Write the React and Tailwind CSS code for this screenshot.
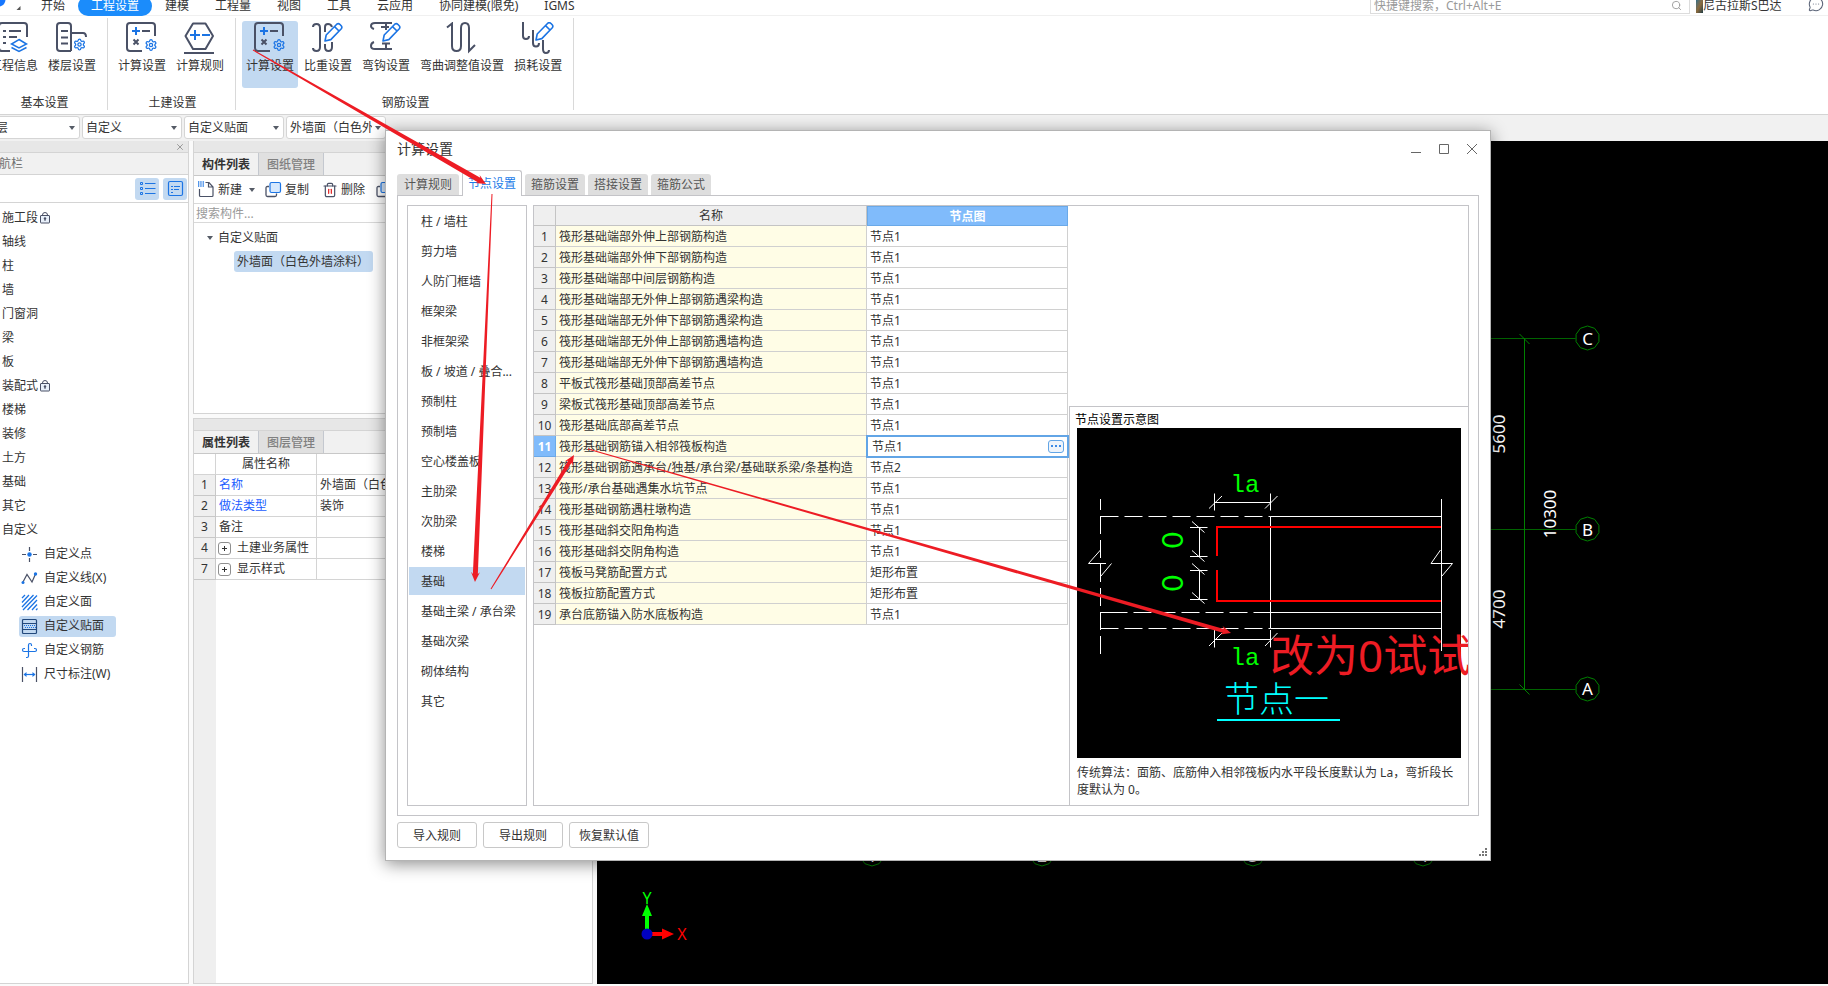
import React, { useState } from 'react';
import { Settings, Search, X, Trash2, MessageCircleMore } from 'lucide-react';

const INK = '#4a5166';
const BLUE = '#1b74e4';

const menus = ['开始', '工程设置', '建模', '工程量', '视图', '工具', '云应用', '协同建模(限免)', 'IGMS'];

const navItems = [
  { name: '施工段', locked: true },
  { name: '轴线' },
  { name: '柱' },
  { name: '墙' },
  { name: '门窗洞' },
  { name: '梁' },
  { name: '板' },
  { name: '装配式', locked: true },
  { name: '楼梯' },
  { name: '装修' },
  { name: '土方' },
  { name: '基础' },
  { name: '其它' },
  { name: '自定义' },
];

const categories = [
  '柱 / 墙柱', '剪力墙', '人防门框墙', '框架梁', '非框架梁', '板 / 坡道 / 叠合...',
  '预制柱', '预制墙', '空心楼盖板', '主肋梁', '次肋梁', '楼梯', '基础',
  '基础主梁 / 承台梁', '基础次梁', '砌体结构', '其它',
];

const nodeRows = [
  ['筏形基础端部外伸上部钢筋构造', '节点1'],
  ['筏形基础端部外伸下部钢筋构造', '节点1'],
  ['筏形基础端部中间层钢筋构造', '节点1'],
  ['筏形基础端部无外伸上部钢筋遇梁构造', '节点1'],
  ['筏形基础端部无外伸下部钢筋遇梁构造', '节点1'],
  ['筏形基础端部无外伸上部钢筋遇墙构造', '节点1'],
  ['筏形基础端部无外伸下部钢筋遇墙构造', '节点1'],
  ['平板式筏形基础顶部高差节点', '节点1'],
  ['梁板式筏形基础顶部高差节点', '节点1'],
  ['筏形基础底部高差节点', '节点1'],
  ['筏形基础钢筋锚入相邻筏板构造', '节点1'],
  ['筏形基础钢筋遇承台/独基/承台梁/基础联系梁/条基构造', '节点2'],
  ['筏形/承台基础遇集水坑节点', '节点1'],
  ['筏形基础钢筋遇柱墩构造', '节点1'],
  ['筏形基础斜交阳角构造', '节点1'],
  ['筏形基础斜交阴角构造', '节点1'],
  ['筏板马凳筋配置方式', '矩形布置'],
  ['筏板拉筋配置方式', '矩形布置'],
  ['承台底筋锚入防水底板构造', '节点1'],
];

const properties = [
  { no: 1, name: '名称', value: '外墙面（白色外墙涂料）', link: true },
  { no: 2, name: '做法类型', value: '装饰', link: true },
  { no: 3, name: '备注', value: '' },
  { no: 4, name: '土建业务属性', value: '', group: true },
  { no: 7, name: '显示样式', value: '', group: true },
];

/* ---------- ribbon icons ---------- */

const RibbonSvg = ({ children }) => (
  <svg width="32" height="32" viewBox="0 0 32 32" fill="none" stroke={INK} strokeWidth="2" aria-hidden="true">
    {children}
  </svg>
);

const Gear = ({ x, y }) => <Settings x={x} y={y} width={13} height={13} color={BLUE} strokeWidth={2.4} />;

const Pencil = ({ x = 0, y = 0 }) => (
  <g transform={`translate(${x} ${y})`} stroke={BLUE} strokeWidth="1.6" strokeLinejoin="round">
    <path d="M13 19 14.2 13 25 2 Q26.5 1 28 2.5 L29.2 3.8 Q30.5 5.3 29.3 6.8 L18.8 17.6Z" />
    <path d="M22.5 4.6 27 9" />
  </g>
);

const ProjectIcon = () => (
  <RibbonSvg>
    <path d="M12 29H4Q1 29 1 26V4Q1 1 4 1H26Q29 1 29 4V15" />
    <path d="M5 9h3M11 9h12M5 15h3M11 15h8M5 21h3" />
    <path d="M21 17.5 28.5 22 21 26 13.5 22ZM13.5 25.5 21 29.5 28.5 25.5" stroke={BLUE} strokeWidth="1.5" />
  </RibbonSvg>
);

const FloorIcon = () => (
  <RibbonSvg>
    <path d="M15 29H4Q1 29 1 26V4Q1 1 4 1H12Q15 1 15 4V29M15 11H27Q30 11 30 15" />
    <path d="M5 9h7M5 15.5h7M5 21.5h7" />
    <Gear x={17} y={16} />
  </RibbonSvg>
);

const CalcIcon = () => (
  <RibbonSvg>
    <path d="M16 29H4Q1 29 1 26V4Q1 1 4 1H26Q29 1 29 4V14" />
    <path d="M6 9h8M10 5v8" stroke={BLUE} />
    <path d="M16 9h8M7.5 17.5l5 5M12.5 17.5l-5 5" />
    <Gear x={18.5} y={16.5} />
  </RibbonSvg>
);

const RuleIcon = () => (
  <RibbonSvg>
    <path d="M9 1.5H21.5L29 14 21.5 27H9L1.5 14Z" strokeLinejoin="round" />
    <path d="M6 13h10M11 8v10M18 13h8" stroke={BLUE} />
    <path d="M0 31h30" />
  </RibbonSvg>
);

const WeightIcon = () => (
  <RibbonSvg>
    <path d="M1 5Q1 2 4.5 2Q8 2 8 6V25Q8 29 4.5 29Q1 29 1 26" />
    <path d="M13 10V5Q13 2 16 2Q19 2 20 5M13 22V25Q13 29 16.5 29Q20 29 20 25V20" />
    <Pencil />
  </RibbonSvg>
);

const HookIcon = () => (
  <RibbonSvg>
    <path d="M4 7Q1 6 1 4Q1 1 5 1H22M16 1V8M11 5H19" />
    <path d="M4 20Q1 21 1 24Q1 27 5 27H22M16 21V27M12 21.5H20" />
    <Pencil />
  </RibbonSvg>
);

const BendIcon = () => (
  <RibbonSvg>
    <path d="M1 5.5 6 1.5V24Q6 29 10.5 29Q15 29 15 24V6Q15 1 19 1Q23 1 23 6V29L29 23" />
  </RibbonSvg>
);

const LossIcon = () => (
  <RibbonSvg>
    <path d="M1 0V14Q1 17 4 17Q7 17 7 14M11 8V21Q11 24.5 14 24.5Q17 24.5 17 21M21 18V27Q21 31 24 31Q27 31 27 28" />
    <Pencil x={1} y={-1} />
  </RibbonSvg>
);

const ribbonGroups = [
  { title: '基本设置', buttons: [['工程信息', ProjectIcon], ['楼层设置', FloorIcon]] },
  { title: '土建设置', buttons: [['计算设置', CalcIcon], ['计算规则', RuleIcon]] },
  {
    title: '钢筋设置',
    active: '计算设置',
    buttons: [
      ['计算设置', CalcIcon],
      ['比重设置', WeightIcon],
      ['弯钩设置', HookIcon],
      ['弯曲调整值设置', BendIcon],
      ['损耗设置', LossIcon],
    ],
  },
];

/* ---------- small icons ---------- */

const SmallSvg = ({ children, className }) => (
  <svg width="17" height="17" viewBox="0 0 17 17" fill="none" stroke={BLUE} className={className} aria-hidden="true">
    {children}
  </svg>
);

const Caret = ({ className }) => (
  <svg width="6" height="4" viewBox="0 0 6 4" className={className} aria-hidden="true">
    <path d="M0 0h6L3 4z" fill="#555b66" />
  </svg>
);

const LockIcon = () => (
  <svg width="10" height="12" viewBox="0 0 10 12" fill="none" stroke={INK} className="ml-[2px]" aria-label="已锁定">
    <path d="M2.5 4V3Q2.5 .5 5 .5Q7.5 .5 7.5 3V4" />
    <rect x=".5" y="3.500" width="9" height="7.500" rx=".5" fill="#e8f0fa" />
    <circle cx="5" cy="6.500" r="1.200" fill={INK} stroke="none" />
    <path d="M5 7v2" />
  </svg>
);

const CopyIcon = () => (
  <SmallSvg>
    <path d="M4 5.5H2.5Q1 5.5 1 7V14Q1 15.5 2.5 15.5H10Q11.5 15.5 11.5 14V12.5" stroke={INK} strokeWidth="1.3" />
    <rect x="5" y="1.5" width="10.5" height="10" rx="1.5" fill="#d6e8fd" strokeWidth="1.2" />
  </SmallSvg>
);

const TrashIcon = () => (
  <span className="relative flex">
    <Trash2 size={16} color={INK} strokeWidth={1.8} className="[&>line]:stroke-[#e02020] [&>path:nth-child(-n+2)]:stroke-[#e02020]" />
  </span>
);

const customTools = [
  {
    name: '自定义点',
    icon: (
      <SmallSvg>
        <path d="M8.5 1v4M8.5 12v4M1 8.5h4M12 8.5h4" stroke={INK} strokeWidth="1.2" />
        <circle cx="8.5" cy="8.5" r="2.2" fill={BLUE} stroke="none" />
      </SmallSvg>
    ),
  },
  {
    name: '自定义线(X)',
    icon: (
      <SmallSvg>
        <path d="M2 12 6 4.5 11 12 14.5 4" stroke={INK} strokeWidth="1.2" />
        <circle cx="2" cy="12.5" r="1.5" fill={BLUE} stroke="none" />
        <circle cx="14.5" cy="4" r="1.7" fill={BLUE} stroke="none" />
      </SmallSvg>
    ),
  },
  {
    name: '自定义面',
    icon: (
      <SmallSvg>
        <path d="M1 4 4 1M1 8.5 8 1M1 13 12.5 1M2 16 16 1.5M6.5 16 16 6M11 16 16 10.5M15 16 16.5 14.5" strokeWidth="1.3" />
      </SmallSvg>
    ),
  },
  {
    name: '自定义贴面',
    active: true,
    icon: (
      <SmallSvg>
        <rect x="1.5" y="1.5" width="14" height="14" rx="1" stroke="#23497c" strokeWidth="1.2" />
        <path d="M2 5.5h13M2 11.5h13" stroke="#23497c" />
        <path d="M3 7.5h12M4 9.5h11" strokeDasharray="1 1" />
      </SmallSvg>
    ),
  },
  {
    name: '自定义钢筋',
    icon: (
      <SmallSvg>
        <path d="M10.500 4V3Q10.500 1.500 9 1.500Q7.500 1.500 7.500 3V14Q7.500 15.500 6 15.500H5M4 6.500H3Q1.500 6.500 1.500 8Q1.500 9.500 3 9.500H14Q15.500 9.500 15.500 8Q15.500 6.500 14 6.500H13" strokeWidth="1.200" />
      </SmallSvg>
    ),
  },
  {
    name: '尺寸标注(W)',
    icon: (
      <SmallSvg>
        <path d="M1.5 1v15M15.500 1v15" stroke={INK} strokeWidth="1.2" />
        <path d="M3 8.500h11" strokeWidth="1.2" />
        <path d="M2.500 8.500 5.500 6v5zM14.500 8.500 11.500 6v5z" fill={BLUE} stroke="none" />
      </SmallSvg>
    ),
  },
];

/* ---------- top area ---------- */

const MenuBar = () => (
  <header className="flex h-[16px] shrink-0 items-end border-b border-[#f0f0f0] bg-white">
    <div className="flex w-[28px] shrink-0 items-start self-start">
      <svg width="24" height="14" viewBox="0 0 24 14" aria-hidden="true">
        <path d="M0 0H5.500Q5 5 0 6.500Z" fill="#1677ff" />
        <path d="M20.500 6V10H16.500Z" fill="#555" />
      </svg>
    </div>
    <nav className="-mb-px flex">
      {menus.map((m) => (
        <button
          key={m}
          className={
            m === '工程设置'
              ? 'h-[20px] rounded-[10px] bg-[#1b8cfb] px-[13px] leading-[20px] text-white'
              : 'h-[20px] px-[13px] leading-[20px]'
          }
        >
          {m}
        </button>
      ))}
    </nav>
    <div className="mb-px ml-auto flex w-[320px] items-center border border-[#dcdcdc] pr-[7px] pl-[3px]">
      <input
        aria-label="快捷键搜索"
        placeholder="快捷键搜索，Ctrl+Alt+E"
        className="h-[16px] min-w-0 flex-1 pt-px outline-none placeholder:text-[#9a9a9a]"
      />
      <Search size={11} color="#9a9a9a" />
    </div>
    <div className="ml-[6px] flex h-[18px] w-[112px] items-center">
      <span className="h-[13px] w-[7px] bg-linear-to-br from-[#2f6f86] via-[#8a6a3c] to-[#1d3d44]" />
      <span>尼古拉斯S巴达</span>
    </div>
    <button className="mr-[4px] w-[16px] pb-[3px]" aria-label="消息">
      <MessageCircleMore size={16} color="#5b6478" strokeWidth={1.6} />
    </button>
  </header>
);

const Ribbon = () => (
  <div className="flex h-[99px] shrink-0 border-b border-[#d4d4d4] bg-white pt-[2px]">
    <div className="-ml-[20px] flex h-[92px]">
      {ribbonGroups.map((g) => (
        <section key={g.title} className="flex flex-col items-center border-r border-[#d9d9d9] pt-[3px] pr-[7px] pl-[6px]">
          <div className="flex gap-[2px]">
            {g.buttons.map(([label, Icon]) => (
              <button
                key={label}
                className={
                  g.active === label
                    ? 'flex h-[67px] flex-col items-center gap-[2px] rounded-[3px] bg-[#c2d9f1] px-[4px] pt-px'
                    : 'flex h-[67px] flex-col items-center gap-[2px] px-[4px] pt-px'
                }
              >
                <Icon />
                <span className="leading-[20px]">{label}</span>
              </button>
            ))}
          </div>
          <h2 className="mt-[6px] pl-[3px] leading-[18px]">{g.title}</h2>
        </section>
      ))}
    </div>
  </div>
);

const FilterBar = () => (
  <div className="-ml-[20px] flex h-[26px] shrink-0 items-start gap-[2px] bg-[#f1f1f1] pt-px">
    {[
      ['楼层', '首层'],
      ['专业', '自定义'],
      ['构件类型', '自定义贴面'],
      ['构件', '外墙面（白色外墙涂料）'],
    ].map(([label, value]) => (
      <div key={label} className="relative w-[100px]">
        <select
          aria-label={label}
          className="h-[23px] w-full appearance-none rounded-[3px] border border-[#d5d5d5] bg-white pr-[13px] pl-[3px] outline-none"
        >
          <option>{value}</option>
        </select>
        <Caret className="pointer-events-none absolute top-[10px] right-[5px]" />
      </div>
    ))}
  </div>
);

/* ---------- left panels ---------- */

const NavPanel = () => (
  <aside className="flex w-[189px] shrink-0 flex-col border-r border-b border-[#d4d4d4] bg-white">
    <div className="flex h-[12px] items-center justify-end border-b border-[#d4d4d4] bg-[#e7e7e7] pr-[3px]">
      <button aria-label="关闭导航栏"><X size={10} color="#8a8a8a" /></button>
    </div>
    <h2 className="-ml-[13px] h-[22px] border-b border-[#d4d4d4] bg-[#f1f1f1] leading-[22px] text-[#707070]">导航栏</h2>
    <div className="flex h-[28px] items-center justify-end gap-[4px] border-b border-[#d4d4d4] pr-px">
      <button aria-label="列表" className="flex h-[22px] w-[24px] items-center justify-center rounded-[3px] bg-[#c2d9f1]">
        <SmallSvg>
          <path d="M6 3.500h10.500M6 8.500h10.500M6 13.500h10.500" />
          <path d="M1.500 2.500h2v2h-2zM1.500 7.500h2v2h-2zM1.500 12.500h2v2h-2z" />
        </SmallSvg>
      </button>
      <button aria-label="面板" className="flex h-[22px] w-[24px] items-center justify-center rounded-[3px] bg-[#c2d9f1]">
        <SmallSvg>
          <rect x="1.500" y="1.500" width="14" height="14" rx="1.500" strokeWidth="1.200" />
          <path d="M4 6.500h2M7 6.500h6M4 9.500h2M7 9.500h5M4 12.500h2" />
        </SmallSvg>
      </button>
    </div>
    <ul className="pt-[3px]">
      {navItems.map((item) => (
        <li key={item.name} className="flex h-[24px] items-center pl-[2px]">
          {item.name}
          {item.locked && <LockIcon />}
        </li>
      ))}
      {customTools.map((tool) => (
        <li key={tool.name} className="flex h-[24px] items-center pl-[19px]">
          <button
            className={
              tool.active
                ? 'flex h-[21px] items-center gap-[6px] rounded-[3px] bg-[#c2d9f1] pr-[12px] pl-[2px]'
                : 'flex h-[21px] items-center gap-[6px] pl-[2px]'
            }
          >
            {tool.icon}
            {tool.name}
          </button>
        </li>
      ))}
    </ul>
  </aside>
);

const PanelTabs = ({ tabs }) => (
  <div>
    <div className="h-[12px] border-b border-[#d4d4d4] bg-[#e7e7e7]" />
    <div className="flex h-[23px] border-b border-[#c8c8c8] bg-[#f1f1f1]">
      <button className="w-[65px] border-r border-[#c4c8cf] pt-px font-bold">{tabs[0]}</button>
      <button className="w-[65px] border-r border-[#c4c8cf] bg-[#e0e0e0] pt-px font-medium text-[#808080]">{tabs[1]}</button>
    </div>
  </div>
);

const ComponentPanel = () => (
  <section className="flex h-[273px] shrink-0 flex-col border border-t-0 border-[#d4d4d4] bg-white">
    <PanelTabs tabs={['构件列表', '图纸管理']} />
    <div className="flex h-[28px] shrink-0 items-center overflow-hidden border-b border-[#d9d9d9] pl-[4px] whitespace-nowrap">
      <button className="flex items-center gap-[3px]">
        <SmallSvg>
          <path d="M1.500 8V14.500Q1.500 15.500 2.500 15.500H14Q15 15.500 15 14.500V6L11 1.500H7.500M10.500 1.500V6H15" stroke={INK} strokeWidth="1.200" />
          <path d="M0 1h6M0 3h6M0 5h6" strokeWidth="1.300" strokeDasharray="1.300 1" />
        </SmallSvg>
        新建
      </button>
      <Caret className="ml-[7px]" />
      <button className="ml-[10px] flex items-center gap-[3px]"><CopyIcon />复制</button>
      <button className="ml-[13px] flex items-center gap-[3px]"><TrashIcon />删除</button>
      <button className="ml-[11px] flex items-center gap-[3px]"><CopyIcon />层间复制</button>
    </div>
    <input
      aria-label="搜索构件"
      placeholder="搜索构件..."
      className="h-[19px] shrink-0 border-b border-[#d9d9d9] pt-px pl-[2px] outline-none placeholder:text-[#9a9a9a]"
    />
    <div className="flex flex-col items-start gap-px pt-[3px]">
      <div className="flex h-[24px] items-center pl-[13px]">
        <Caret className="mr-[5px]" />
        自定义贴面
      </div>
      <button className="ml-[40px] h-[21px] rounded-[3px] bg-[#c2d9f1] pr-[4px] pl-[3px]">外墙面（白色外墙涂料）</button>
    </div>
  </section>
);

const PropertyPanel = () => (
  <section className="mt-[4px] flex flex-1 flex-col border border-[#d4d4d4] bg-white">
    <PanelTabs tabs={['属性列表', '图层管理']} />
    <table className="w-full table-fixed border-separate border-spacing-0">
      <thead>
        <tr className="h-[21px]">
          <th className="w-[22px] border-r border-b border-[#d4d4d4]" aria-label="序号" />
          <th className="w-[101px] border-r border-b border-[#d4d4d4] p-0 font-normal">属性名称</th>
          <th className="border-b border-[#d4d4d4] p-0 font-normal">属性值</th>
        </tr>
      </thead>
      <tbody>
        {properties.map((p) => (
          <tr key={p.no} className="h-[21px]">
            <td className="border-r border-b border-[#c8c8c8] bg-[#efefef] p-0 text-center">{p.no}</td>
            <td className="border-r border-b border-[#d4d4d4] p-0 pl-[2px] whitespace-nowrap">
              {p.group ? (
                <span className="flex items-center gap-[6px]">
                  <button
                    aria-label={`展开${p.name}`}
                    className="flex h-[13px] w-[13px] items-center justify-center rounded-[3px] border border-[#8f8f8f]"
                  >
                    <svg width="5" height="5" viewBox="0 0 5 5"><path d="M0 2.500h5M2.500 0v5" stroke="#333" /></svg>
                  </button>
                  {p.name}
                </span>
              ) : (
                <span className={p.link ? 'pl-px text-[#1a5cff]' : 'pl-px'}>{p.name}</span>
              )}
            </td>
            <td className="border-b border-[#d4d4d4] p-0 pl-[3px]">{p.value}</td>
          </tr>
        ))}
      </tbody>
    </table>
    <div className="w-[22px] flex-1 bg-[#efefef]" />
  </section>
);

/* ---------- drawing canvas ---------- */

const bubble = (cx, cy) =>
  Array.from({ length: 10 }, (_, i) => {
    const a = (i * Math.PI) / 5 + Math.PI / 2;
    return `${cx + 12 * Math.cos(a)},${cy + 12 * Math.sin(a)}`;
  }).join(' ');

const Canvas = () => (
  <main className="min-w-0 flex-1 bg-black">
    <svg width="100%" height="100%" fontFamily="Noto Sans, sans-serif" fontSize="17" fill="#fff" textAnchor="middle">
      <g stroke="#008000" fill="none">
        <path d="M800 197.500H978.500M800 388.500H978.500M800 548.500H978.500" stroke="#006400" />
        <path d="M927.500 197.500V548.500M922.500 193l10 10M922.500 543.500l10 10" />
        {[197, 388, 548].map((y) => <polygon key={y} points={bubble(990.5, y)} />)}
        {[275, 445, 656, 826].map((x) => <polygon key={x} points={bubble(x, 713)} />)}
      </g>
      <text x="990.5" y="204">C</text>
      <text x="990.5" y="395">B</text>
      <text x="990.5" y="554">A</text>
      {[275, 445, 656, 826].map((x, i) => <text key={x} x={x} y="721">{i + 1}</text>)}
      <text transform="translate(908 293) rotate(-90)">5600</text>
      <text transform="translate(908 468) rotate(-90)">4700</text>
      <text transform="translate(959 373) rotate(-90)">10300</text>
      <path d="M48 793V775H45L50 763 55 775H52V793Z" fill="#0f0" />
      <path d="M50 791H65V787.500L77 793 65 798.500V795H50Z" fill="#f00" />
      <circle cx="50" cy="793" r="5.500" fill="#0000c0" />
      <text x="50" y="763" fill="#0f0" fontSize="16">Y</text>
      <text x="85" y="799" fill="#f00" fontSize="16">X</text>
    </svg>
  </main>
);

/* ---------- dialog ---------- */

const NodeDiagram = () => (
  <svg viewBox="0 0 384 330" className="w-full bg-black" fill="none" stroke="#fff" role="img" aria-label="节点一">
    <path d="M23.500 71V226" strokeDasharray="18 6" strokeDashoffset="7" />
    <path d="M23.500 88.500H193.500M23.500 200.500H193.500M56.500 184.500H193.500" strokeDasharray="18 6" />
    <path d="M23.500 184.500H50.500" />
    <path d="M193.500 88.500H364.500M193.500 184.500H364.500M193.500 200.500H364.500M193.500 88.500V200.500M364.500 71V223" />
    <path d="M23.500 122 11.500 135.500H29M34.500 135.500 24 148M363.500 122 354 135.500H375.500L365 148" />
    <path d="M137.500 74.500H193.500M137.500 65.500V82.500M193.500 65.500V82.500M132 80.500 145 68M188 80.500 200.500 68" />
    <path d="M137.500 211.500H193.500M137.500 202V219.500M193.500 202V219.500M132 218 145 205M188 218 200.500 205" />
    <path d="M122.500 99.500V128.500M113 99.500H130.500M113 128.500H130.500M115 93.500 127.500 104.500M115 122.500 127.500 133.500" />
    <path d="M122.500 142.500V171.500M113 142.500H130.500M113 171.500H130.500M115 135.500 127.500 146.500M115 164.500 127.500 175.500" />
    <path d="M140 128V99H364M140 142V173H364" stroke="#f00" strokeWidth="2" />
    <path d="M140 292H263" stroke="#0ff" strokeWidth="2" />
    <g stroke="none" fill="#0f0">
      <g fontFamily="Liberation Mono, monospace" fontSize="24" textAnchor="middle">
        <text x="168" y="64">la</text>
        <text x="168" y="237">la</text>
      </g>
      <g fontFamily="Lato, sans-serif" fontSize="28" textAnchor="middle">
        <text transform="translate(106 112) rotate(-90)">0</text>
        <text transform="translate(106 155) rotate(-90)">0</text>
      </g>
      <text x="147" y="284" fontFamily="Noto Sans CJK SC, sans-serif" fontWeight="300" fontSize="35" fill="#0ff">节点一</text>
    </g>
  </svg>
);

const NodeTable = () => {
  const [selected, setSelected] = useState(10);

  return (
    <table className="w-full table-fixed border-separate border-spacing-0">
      <thead>
        <tr className="h-[20px]">
          <th className="w-[22px] border-r border-b border-[#c4c4c4] bg-[#efefef] p-0" aria-label="序号" />
          <th className="border-r border-b border-[#c4c4c4] bg-[#efefef] p-0 pt-px leading-[18px] font-normal">名称</th>
          <th className="w-[201px] border border-[#6aa9e8] bg-[#80bbfb] p-0 pt-px leading-[17px] font-bold text-white">节点图</th>
        </tr>
      </thead>
      <tbody>
        {nodeRows.map(([name, value], i) => (
          <tr key={name} className="h-[21px]" onClick={() => setSelected(i)}>
            <td
              className={
                i === selected
                  ? 'border-r border-b border-[#6aa9e8] bg-[#80bbfb] p-0 pt-[2px] text-center font-bold text-white'
                  : 'border-r border-b border-[#c4c4c4] bg-[#efefef] p-0 pt-[2px] text-center'
              }
            >
              {i + 1}
            </td>
            <td className="border-r border-b border-[#d0d0d0] bg-[#fffde6] p-0 pt-[2px] pl-[3px] whitespace-nowrap">{name}</td>
            {i === selected ? (
              <td className="border-r border-b border-[#6aa9e8] bg-white p-0 pt-[2px] pr-[3px] pl-[5px] outline-2 -outline-offset-1 outline-[#62a5e6]">
                <div className="flex items-center justify-between">
                  {value}
                  <button
                    aria-label="选择节点"
                    className="mb-[2px] flex h-[13px] w-[16px] items-center justify-center rounded-[3px] border border-[#62a5e6] bg-[#eef4fb]"
                  >
                    <svg width="10" height="2" viewBox="0 0 10 2"><path d="M0 0h2v2H0zM4 0h2v2H4zM8 0h2v2H8z" fill="#3b8ae6" /></svg>
                  </button>
                </div>
              </td>
            ) : (
              <td className="border-r border-b border-[#d0d0d0] bg-white p-0 pt-[2px] pl-[3px]">{value}</td>
            )}
          </tr>
        ))}
      </tbody>
    </table>
  );
};

const CalcDialog = () => (
  <div
    role="dialog"
    aria-label="计算设置"
    className="absolute top-[130px] right-[337px] bottom-[125px] left-[385px] flex flex-col border border-[#b4b4b4] bg-white shadow-[0_3px_16px_rgba(0,0,0,0.45)]"
  >
    <div className="flex h-[39px] shrink-0 items-center pr-[13px] pb-[3px] pl-[11px]">
      <h1 className="text-[14px]">计算设置</h1>
      <div className="ml-auto flex gap-[18px] text-[#666]">
        <button aria-label="最小化">
          <svg width="10" height="10" viewBox="0 0 10 10"><path d="M0 8.500h10" stroke="currentColor" /></svg>
        </button>
        <button aria-label="最大化">
          <svg width="10" height="10" viewBox="0 0 10 10"><path d="M.5 .5h9v9h-9z" fill="none" stroke="currentColor" /></svg>
        </button>
        <button aria-label="关闭">
          <svg width="10" height="10" viewBox="0 0 10 10"><path d="M0 0 10 10M10 0 0 10" stroke="currentColor" /></svg>
        </button>
      </div>
    </div>

    <div role="tablist" className="mx-[11px] flex h-[25px] shrink-0 items-end gap-[3px]">
      <button role="tab" className="h-[21px] rounded-t-[3px] bg-[#dedede] px-[7px] text-[#555]">计算规则</button>
      <button role="tab" aria-selected="true" className="z-10 -mb-px h-[26px] rounded-t-[3px] border border-b-0 border-[#c4c4c8] bg-white px-[5px] text-[#1b7ce8]">
        节点设置
      </button>
      {['箍筋设置', '搭接设置', '箍筋公式'].map((t) => (
        <button key={t} role="tab" className="h-[21px] rounded-t-[3px] bg-[#dedede] px-[6px] text-[#555]">{t}</button>
      ))}
    </div>

    <div className="mx-[11px] flex min-h-0 flex-1 gap-[6px] border border-[#c4c4c8] p-[9px]">
      <ul className="flex w-[120px] shrink-0 flex-col gap-[2px] border border-[#c4c4c8] p-px">
        {categories.map((c) => (
          <li
            key={c}
            className={
              c === '基础'
                ? 'h-[28px] bg-[#c2d9f1] pl-[12px] leading-[30px] whitespace-nowrap'
                : 'h-[28px] pl-[12px] leading-[30px] whitespace-nowrap'
            }
          >
            {c}
          </li>
        ))}
      </ul>

      <div className="flex min-w-0 flex-1 border border-[#c4c4c8]">
        <div className="min-w-0 flex-1 pr-px">
          <NodeTable />
        </div>
        <div className="flex w-[399px] shrink-0 flex-col justify-end">
          <section className="h-[399px] border-t border-l border-[#c4c4c8] px-[5px]">
            <h2 className="h-[21px] leading-[25px] text-black">节点设置示意图</h2>
            <div className="px-[2px]">
              <NodeDiagram />
              <p className="pt-[6px] leading-[17px]">
                传统算法：面筋、底筋伸入相邻筏板内水平段长度默认为 La，弯折段长度默认为 0。
              </p>
            </div>
          </section>
        </div>
      </div>
    </div>

    <div className="flex shrink-0 items-end pt-[6px] pr-[3px] pl-[11px]">
      <div className="mb-[12px] flex gap-[6px]">
        {['导入规则', '导出规则', '恢复默认值'].map((t) => (
          <button key={t} className="h-[26px] w-[80px] rounded-[3px] border border-[#c8c8c8] bg-white pt-[2px]">{t}</button>
        ))}
      </div>
      <svg width="8" height="8" viewBox="0 0 8 8" className="mb-[4px] ml-auto" aria-hidden="true">
        <path d="M6 0h2v2H6zM3 3h2v2H3zM6 3h2v2H6zM0 6h2v2H0zM3 6h2v2H3zM6 6h2v2H6z" fill="#777" />
      </svg>
    </div>
  </div>
);

/* ---------- red markup over the window ---------- */

// tapered shaft that widens towards the head
const Arrow = ({ from, to, width }) => {
  const [x1, y1] = from;
  const [x2, y2] = to;
  const len = Math.hypot(x2 - x1, y2 - y1);
  const ux = (x2 - x1) / len;
  const uy = (y2 - y1) / len;
  const at = (d, s) => `${x1 + ux * d - uy * s},${y1 + uy * d + ux * s}`;
  const w = width / 2;
  const points = [at(0, -0.5), at(len - 8, -w), at(len - 10, -4.5), at(len, 0), at(len - 10, 4.5), at(len - 8, w), at(0, 0.5)];
  return <polygon points={points.join(' ')} />;
};

const Markup = () => (
  <div className="pointer-events-none absolute inset-0 z-20 overflow-hidden">
    <svg width="100%" height="100%" fill="#ed1c24" aria-hidden="true">
      <Arrow from={[253, 50]} to={[486, 184]} width={5} />
      <Arrow from={[492, 194]} to={[475, 582]} width={5} />
      <Arrow from={[491, 589]} to={[574, 455]} width={4} />
      <Arrow from={[588, 449]} to={[1231, 633]} width={4} />
    </svg>
    <p className="absolute top-[625px] left-[1270px] w-[198px] overflow-hidden text-[44px] leading-[60px] whitespace-nowrap text-[#ed1c24]">
      改为0试试
    </p>
  </div>
);

const App = () => {
  return (
    <div className="relative flex h-screen flex-col overflow-hidden bg-[#fafafa] pb-[2px] font-['Noto_Sans','Noto_Sans_CJK_SC',sans-serif] text-[12px] leading-[18px] text-[#333]">
      <MenuBar />
      <Ribbon />
      <FilterBar />
      <div className="flex min-h-0 flex-1 gap-[4px]">
        <NavPanel />
        <div className="flex w-[400px] shrink-0 flex-col">
          <ComponentPanel />
          <PropertyPanel />
        </div>
        <Canvas />
      </div>
      <CalcDialog />
      <Markup />
    </div>
  );
};

export default App;
